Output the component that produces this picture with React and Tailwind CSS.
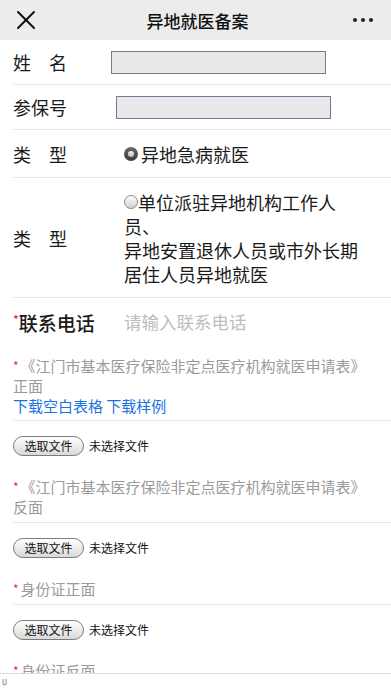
import { X } from 'lucide-react';

const font = { fontFamily: '"Noto Sans CJK SC", "Noto Sans", sans-serif' };

function Radio({ checked }) {
  if (checked) {
    return (
      <span className="inline-flex w-[14px] h-[14px] shrink-0 items-center justify-center rounded-full bg-gradient-to-b from-[#6a6a6a] to-[#3a3a3a]">
        <span className="w-[6px] h-[6px] rounded-full bg-gradient-to-b from-[#f2f2f2] to-[#bdbdbd]" />
      </span>
    );
  }
  return (
    <span className="inline-block w-[14px] h-[14px] shrink-0 rounded-full border border-[#8a8a8a] bg-gradient-to-b from-[#ffffff] to-[#cfcfcf]" />
  );
}

function FileRow() {
  return (
    <div className="flex items-center pl-[13px] pt-[15px] pb-[21px]">
      <span className="flex items-center justify-center w-[71px] h-[20px] rounded-full border border-[#7c7c7c] bg-gradient-to-b from-[#ffffff] to-[#d9d9d9] text-[12px] leading-none text-[#111]">
        选取文件
      </span>
      <span className="ml-[5px] text-[12px] leading-none text-[#111]">未选择文件</span>
    </div>
  );
}

function Star() {
  return <span className="text-[#e0313b] text-[12px] align-top mr-[2px]">*</span>;
}

export default function App() {
  return (
    <div className="relative w-[391px] h-[690px] overflow-hidden bg-white text-[#1a1a1a]" style={font}>
      {/* top bar */}
      <div className="flex items-center justify-between h-[40px] bg-[#ececec] pl-[10px] pr-[18px]">
        <X className="w-[32px] h-[32px] text-[#111]" strokeWidth={1.5} />
        <span className="text-[17px] leading-none font-medium text-[#111]">异地就医备案</span>
        <span className="flex gap-[4px]">
          <span className="w-[4px] h-[4px] rounded-full bg-[#222]" />
          <span className="w-[4px] h-[4px] rounded-full bg-[#222]" />
          <span className="w-[4px] h-[4px] rounded-full bg-[#222]" />
        </span>
      </div>

      {/* form rows */}
      <div className="ml-[13px]">
        <div className="flex items-center h-[45px] border-b border-[#e6e6e6]">
          <span className="w-[98px] text-[18px] leading-none">姓　名</span>
          <span className="w-[215px] h-[23px] bg-[#e9e7e8] border border-[#6f7c96]" />
        </div>
        <div className="flex items-center h-[45px] border-b border-[#e6e6e6]">
          <span className="w-[103px] text-[18px] leading-none">参保号</span>
          <span className="w-[215px] h-[23px] bg-[#e8e8ea] border border-[#6f7c96]" />
        </div>
        <div className="flex items-center h-[48px] border-b border-[#e6e6e6]">
          <span className="w-[111px] text-[18px] leading-none">类　型</span>
          <Radio checked />
          <span className="ml-[3px] text-[18px] leading-none">异地急病就医</span>
        </div>
        <div className="flex items-center h-[120px] border-b border-[#e6e6e6]">
          <span className="w-[111px] text-[18px] leading-none">类　型</span>
          <div className="text-[18px] leading-[24px]">
            <div className="flex items-center">
              <Radio />
              <span>单位派驻异地机构工作人</span>
            </div>
            <div>员、</div>
            <div>异地安置退休人员或市外长期</div>
            <div>居住人员异地就医</div>
          </div>
        </div>
        <div className="flex items-center h-[48px]">
          <span className="w-[111px] text-[19px] leading-none font-medium">
            <span className="text-[#e0313b] text-[12px] align-top">*</span>联系电话
          </span>
          <span className="text-[17.5px] leading-none text-[#bdbdbd]">请输入联系电话</span>
        </div>

        {/* upload 1 */}
        <div className="mt-[10px] pb-[4px] border-b border-[#e6e6e6] text-[15px] leading-[20px] text-[#9a9a9a]">
          <div>
            <Star />《江门市基本医疗保险非定点医疗机构就医申请表》
          </div>
          <div>正面</div>
          <div className="text-[#1a73e0]">下载空白表格 下载样例</div>
        </div>
      </div>
      <FileRow />

      <div className="ml-[13px] pb-[5px] border-b border-[#e6e6e6] text-[15px] leading-[20px] text-[#9a9a9a]">
        <div>
          <Star />《江门市基本医疗保险非定点医疗机构就医申请表》
        </div>
        <div>反面</div>
      </div>
      <FileRow />

      <div className="ml-[13px] pb-[5px] border-b border-[#e6e6e6] text-[15px] leading-[20px] text-[#9a9a9a]">
        <Star />身份证正面
      </div>
      <FileRow />

      <div className="ml-[13px] text-[15px] leading-[20px] text-[#9a9a9a]">
        <Star />身份证反面
      </div>

      {/* bottom toolbar strip */}
      <div className="absolute left-0 right-0 bottom-0 h-[17px] flex items-center bg-white border-t border-[#dcdcdc] pl-[2px]">
        <span className="text-[7px] leading-[8px] text-[#555]">U</span>
      </div>
    </div>
  );
}
